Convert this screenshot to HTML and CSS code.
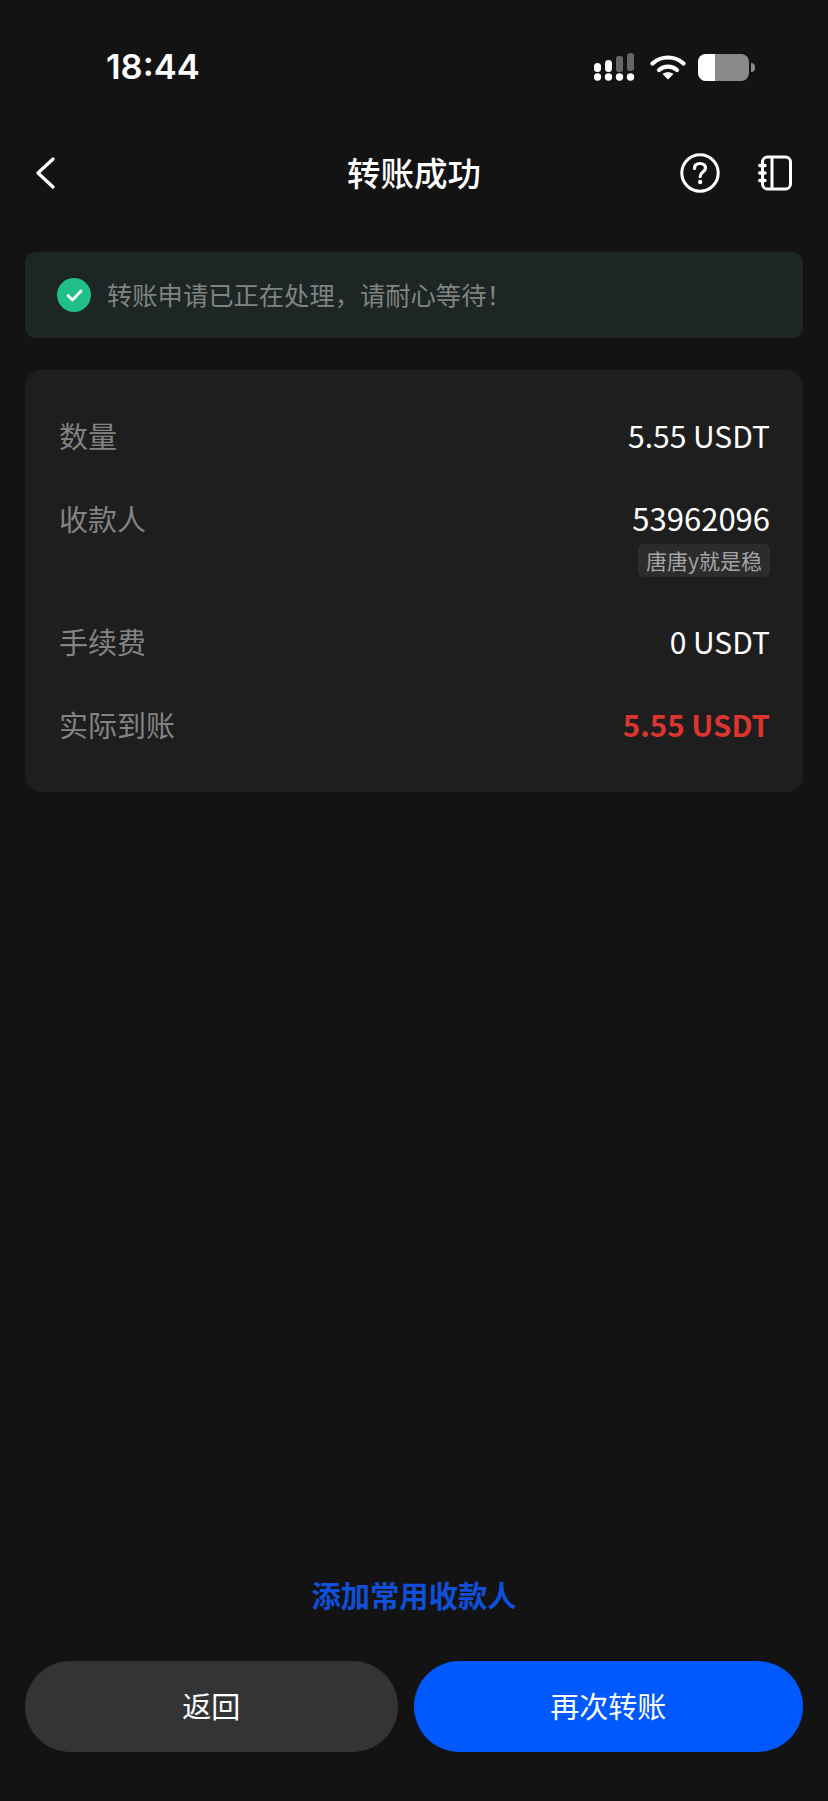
FILE: index.html
```html
<!DOCTYPE html>
<html lang="zh-CN">
<head>
  <meta charset="UTF-8">
  <title>转账成功</title>
  <meta name="viewport" content="width=device-width, initial-scale=1.0">
  <link rel="stylesheet" href="styles.css">
</head>
<body>
  <div class="page">
    <div class="status-bar">
      <span class="time">18:44</span>
      <div class="status-icons">
        <svg class="signal" width="44" height="28" viewBox="0 0 44 28">
          <rect x="0" y="10" width="7" height="9" rx="3.5" fill="#fff"/>
          <rect x="11" y="7" width="7" height="12" rx="3.5" fill="#fff"/>
          <rect x="22" y="3" width="7" height="16" rx="3" fill="#666"/>
          <rect x="33" y="0" width="7" height="18" rx="3" fill="#666"/>
          <circle cx="3.5" cy="24" r="3.7" fill="#fff"/>
          <circle cx="14.5" cy="24" r="3.7" fill="#fff"/>
          <circle cx="25.5" cy="24" r="3.7" fill="#fff"/>
          <circle cx="36.5" cy="24" r="3.7" fill="#fff"/>
        </svg>
        <svg class="wifi" width="36" height="26" viewBox="0 0 36 26">
          <path d="M2.5 9.5 C11 1.500 25 1.500 33.500 9.500" fill="none" stroke="#fff" stroke-width="4.200" stroke-linecap="round"/>
          <path d="M9 16 C14 11.500 22 11.500 27 16" fill="none" stroke="#fff" stroke-width="4.200" stroke-linecap="round"/>
          <path d="M12.500 20 C15.500 17.500 20.500 17.500 23.500 20 L18 25.500 Z" fill="#fff"/>
        </svg>
        <div class="battery">
          <div class="battery-body"><div class="battery-fill"></div></div>
          <div class="battery-nub"></div>
        </div>
      </div>
    </div>

    <div class="nav">
      <svg class="back" width="20" height="32" viewBox="0 0 20 32">
        <path d="M18 2 L3 16 L18 30" fill="none" stroke="#fff" stroke-width="3.200" stroke-linecap="round" stroke-linejoin="round"/>
      </svg>
      <h1 class="title">转账成功</h1>
      <div class="nav-icons">
        <svg width="40" height="40" viewBox="0 0 40 40">
          <circle cx="20" cy="20" r="18.200" fill="none" stroke="#fff" stroke-width="3"/>
          <path d="M14.500 15.500 C14.500 12 17 10.500 20 10.500 C23.200 10.500 25.500 12.500 25.500 15.200 C25.500 18.800 20.200 19 20.200 23.500" fill="none" stroke="#fff" stroke-width="3.200" stroke-linecap="round"/>
          <circle cx="20.200" cy="29" r="2.200" fill="#fff"/>
        </svg>
        <svg width="34" height="36" viewBox="0 0 34 36">
          <rect x="4.500" y="2" width="28" height="32" rx="5" fill="none" stroke="#fff" stroke-width="3"/>
          <path d="M14 2 V34" stroke="#fff" stroke-width="3"/>
          <path d="M1.700 10.500 H7 M1.700 18 H7 M1.700 25.500 H7" stroke="#fff" stroke-width="3.400" stroke-linecap="round"/>
        </svg>
      </div>
    </div>

    <div class="notice">
      <svg width="34" height="34" viewBox="0 0 34 34">
        <circle cx="17" cy="17" r="17" fill="#1fbf87"/>
        <path d="M11 17.500 L15.500 22 L24 13" fill="none" stroke="#fff" stroke-width="2.800" stroke-linecap="round" stroke-linejoin="round"/>
      </svg>
      <span class="notice-text">转账申请已正在处理&#xFF0C;请耐心等待&#xFF01;</span>
    </div>

    <div class="card">
      <div class="row">
        <span class="label">数量</span>
        <span class="value">5.55 USDT</span>
      </div>
      <div class="row row-payee">
        <span class="label">收款人</span>
        <div class="payee">
          <span class="value value-id">53962096</span>
          <span class="tag">唐唐y就是稳</span>
        </div>
      </div>
      <div class="row">
        <span class="label">手续费</span>
        <span class="value">0 USDT</span>
      </div>
      <div class="row">
        <span class="label">实际到账</span>
        <span class="value value-red">5.55 USDT</span>
      </div>
    </div>

    <div class="footer">
      <a class="add-link">添加常用收款人</a>
      <div class="buttons">
        <button class="btn btn-back" type="button">返回</button>
        <button class="btn btn-again" type="button">再次转账</button>
      </div>
    </div>
  </div>
</body>
</html>
```

FILE: styles.css
```css
* {
  box-sizing: border-box;
}

body {
  margin: 0;
  background: #131314;
  font-family: "Noto Sans CJK SC", "Noto Sans", sans-serif;
  color: #fff;
}

.page {
  height: 1801px;
  padding: 0 25px 49px;
  display: flex;
  flex-direction: column;
  overflow: hidden;
}

.status-bar {
  height: 134px;
  padding: 0 48px 0 81px;
  display: flex;
  justify-content: space-between;
  align-items: center;
}

.time {
  font-family: Inter, sans-serif;
  font-size: 34.5px;
  font-weight: 600;
  line-height: 40px;
}

.status-icons {
  display: flex;
  align-items: center;
  gap: 12px;
}

.battery {
  display: flex;
  align-items: center;
  gap: 2px;
}

.battery-body {
  width: 51px;
  height: 27px;
  border-radius: 8px;
  background: #8a8a8a;
  overflow: hidden;
}

.battery-fill {
  width: 17px;
  height: 100%;
  background: #fff;
}

.battery-nub {
  width: 4px;
  height: 9px;
  border-radius: 0 4px 4px 0;
  background: #8a8a8a;
}

.nav {
  height: 78px;
  display: flex;
  justify-content: space-between;
  align-items: center;
  position: relative;
  padding: 0 11px 0 10px;
}

.title {
  margin: 0;
  padding-bottom: 2px;
  position: absolute;
  left: 0;
  right: 0;
  text-align: center;
  font-size: 33.5px;
  font-weight: 500;
  line-height: 44px;
}

.nav-icons {
  display: flex;
  align-items: center;
  gap: 38px;
}

.notice {
  margin-top: 40px;
  height: 86px;
  padding: 0 32px;
  display: flex;
  align-items: center;
  gap: 16px;
  border-radius: 10px;
  background: #1d2624;
}

.notice-text {
  padding-bottom: 3px;
  font-size: 25.3px;
  color: #7f8482;
}

.card {
  margin-top: 32px;
  height: 422px;
  padding: 30px 33px 0 34px;
  border-radius: 16px;
  background: #1e1e1f;
}

.row {
  height: 83px;
  display: flex;
  justify-content: space-between;
  align-items: flex-start;
}

.row-payee {
  height: 123px;
}

.label {
  font-size: 29px;
  line-height: 70px;
  color: #838384;
}

.value {
  font-size: 30px;
  line-height: 70px;
  color: #fff;
}

.value-id {
  font-size: 31px;
}

.value-red {
  font-size: 29.5px;
  color: #dc352e;
  font-weight: 700;
}

.payee {
  display: flex;
  flex-direction: column;
  align-items: flex-end;
}

.tag {
  margin-top: -9px;
  padding: 0 8px;
  height: 33px;
  line-height: 33px;
  font-size: 21px;
  border-radius: 6px;
  background: #2c2c2d;
  color: #a4a4a5;
}

.footer {
  margin-top: auto;
  display: flex;
  flex-direction: column;
  align-items: center;
}

.add-link {
  font-size: 29.3px;
  font-weight: 700;
  line-height: 40px;
  color: #1050d8;
}

.buttons {
  margin-top: 47px;
  width: 100%;
  display: grid;
  grid-template-columns: 373fr 390fr;
  gap: 16px;
}

.btn {
  height: 91px;
  padding: 0 0 4px;
  border: none;
  border-radius: 46px;
  font-family: inherit;
  font-size: 29px;
  font-weight: 400;
  color: #fff;
}

.btn-back {
  background: #333436;
}

.btn-again {
  background: #0058ff;
}
```
